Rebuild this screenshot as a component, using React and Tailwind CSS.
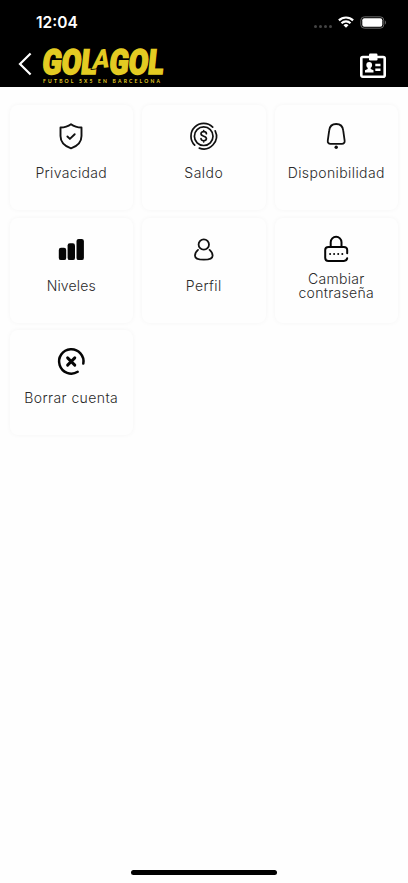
const ShieldIcon = () => (
  <svg viewBox="0 0 36 36" className="w-9 h-9" fill="none" stroke="#111" strokeWidth="1.900" strokeLinecap="round" strokeLinejoin="round">
    <path d="M18 6.200c3 2.300 6.500 3.300 10.500 3.300v8.500c0 6.500-4.500 10.300-10.500 12.300-6-2-10.500-5.800-10.500-12.300V9.500c4 0 7.500-1 10.500-3.300z" />
    <path d="M14.400 18.500l2.500 2.400 4.800-4.700" />
  </svg>
);

const CoinIcon = () => (
  <svg viewBox="0 0 36 36" className="w-9 h-9" fill="none" stroke="#111" strokeWidth="1.700" strokeLinecap="round">
    <circle cx="17.700" cy="18.200" r="9.300" />
    <path d="M8.700 27.200A12.700 12.700 0 0 1 26.700 9.200" />
    <path d="M29.200 12.800A12.700 12.700 0 0 1 13.300 30.100" />
    <path d="M20.400 15.700c0-1.300-1.100-2.100-2.700-2.100s-2.700.9-2.700 2.200c0 3.100 5.400 1.700 5.400 4.800 0 1.300-1.100 2.200-2.700 2.200s-2.700-.9-2.700-2.200M17.700 12.700v1M17.700 22.800v1" />
  </svg>
);

const BellIcon = () => (
  <svg viewBox="0 0 36 36" className="w-9 h-9" fill="none" stroke="#111" strokeWidth="1.800" strokeLinejoin="round">
    <path d="M18.200 6c-4 0-6.600 2.600-7 6.400L9.800 22.300c-.4 2.400.8 3.500 2.700 3.500h11.400c1.900 0 3.100-1.100 2.700-3.500L25.200 12.400C24.800 8.600 22.200 6 18.200 6z" />
    <circle cx="18.200" cy="29.300" r="1.700" fill="#111" stroke="none" />
  </svg>
);

const BarsIcon = () => (
  <svg viewBox="0 0 36 36" className="w-9 h-9" fill="#050505">
    <rect x="5.800" y="16.800" width="7.400" height="12.300" rx="2.200" />
    <rect x="14.600" y="12.200" width="7.400" height="16.900" rx="2.200" />
    <rect x="23.500" y="7.900" width="7.400" height="21.200" rx="2.200" />
  </svg>
);

const PersonIcon = () => (
  <svg viewBox="0 0 36 36" className="w-9 h-9" fill="none" stroke="#111" strokeWidth="1.800" strokeLinecap="round">
    <circle cx="17.800" cy="13.500" r="5.200" />
    <path d="M12 18.900c-1.900 1.600-3 3.700-3 5.800 0 2.700 3.100 4 8.800 4s8.800-1.300 8.800-4c0-2.100-1.100-4.200-3-5.800" />
  </svg>
);

const LockIcon = () => (
  <svg viewBox="0 0 36 36" className="w-9 h-9" fill="none" stroke="#050505" strokeWidth="2" strokeLinecap="round">
    <path d="M12.700 15.500v-4.300a5.400 5.400 0 0 1 10.800 0v4.300" />
    <path d="M29.200 22.200v-3.100c0-2-1.300-3.200-3.300-3.200H10.500c-2 0-3.300 1.200-3.300 3.200v7.600c0 2 1.300 3.200 3.300 3.200h15.400c1.900 0 3.100-1 3.300-2.700" />
    <path d="M12.100 22.900h.01M16.100 22.900h.01M20.200 22.900h.01M24.300 22.900h.01" />
  </svg>
);

const DeleteIcon = () => (
  <svg viewBox="0 0 36 36" className="w-9 h-9" fill="none" stroke="#050505" strokeWidth="2.500" strokeLinecap="round">
    <path d="M30.300 20.600A12.200 12.200 0 1 0 24.700 28.800" />
    <path d="M14.600 14.900l7.200 7.200M21.800 14.900l-7.200 7.200" strokeWidth="2.900" />
  </svg>
);

const items = [
  { label: 'Privacidad', icon: ShieldIcon, tracking: 'tracking-[0.35px]' },
  { label: 'Saldo', icon: CoinIcon, tracking: 'tracking-[0.45px]' },
  { label: 'Disponibilidad', icon: BellIcon, tracking: 'tracking-[0.4px]' },
  { label: 'Niveles', icon: BarsIcon, tracking: 'tracking-[0.15px]' },
  { label: 'Perfil', icon: PersonIcon, tracking: 'tracking-[0.4px]' },
  { label: 'Cambiar contraseña', icon: LockIcon, tracking: 'tracking-[0.3px]' },
  { label: 'Borrar cuenta', icon: DeleteIcon, tracking: 'tracking-[0.4px]' },
];

function StatusBar() {
  return (
    <div className="h-[44px] pl-9 pr-[21px] flex items-center justify-between">
      <span className="text-white text-[15.500px] leading-none font-semibold pt-[2px]">12:04</span>
      <div className="flex items-center">
        <div className="flex gap-[1.500px] mt-[9px] mr-[6px]">
          <span className="w-[3.500px] h-[3.500px] rounded-full bg-[#444]" />
          <span className="w-[3.500px] h-[3.500px] rounded-full bg-[#444]" />
          <span className="w-[3.500px] h-[3.500px] rounded-full bg-[#444]" />
          <span className="w-[3.500px] h-[3.500px] rounded-full bg-[#444]" />
        </div>
        <svg width="16" height="12" viewBox="0 0 16 12" fill="none" stroke="#fff" strokeWidth="2.200" className="mr-[6px]">
          <path d="M.9 4.400a10.200 10.200 0 0 1 14.200 0" />
          <path d="M3.500 7.200a6.500 6.500 0 0 1 9 0" />
          <path d="M8 11.800L5.500 9.200a3.600 3.600 0 0 1 5 0z" fill="#fff" stroke="none" />
        </svg>
        <svg width="27" height="13" viewBox="0 0 27 13">
          <rect x="0.800" y="0.800" width="23" height="11.400" rx="3.500" fill="none" stroke="#666" strokeWidth="1" />
          <rect x="2.300" y="2.300" width="20" height="8.400" rx="2" fill="#fff" />
          <path d="M25 4.500c1.300.5 1.300 3.500 0 4z" fill="#666" />
        </svg>
      </div>
    </div>
  );
}

function Logo() {
  return (
    <svg width="126" height="42" viewBox="0 0 126 42" fill="#e3cb22" className="ml-[9px] -mt-[3px] overflow-visible">
      <g
        transform="translate(0.500 31) skewX(-6)"
        fontFamily="Roboto"
        fontWeight="900"
        fontSize="34.500"
        stroke="#e3cb22"
        strokeWidth="1.700"
        strokeLinejoin="miter"
      >
        <text x="0" y="0" textLength="54" lengthAdjust="spacingAndGlyphs">GOL</text>
        <text x="67" y="0" textLength="54" lengthAdjust="spacingAndGlyphs">GOL</text>
      </g>
      <text
        transform="translate(50.500 26) rotate(-6) skewX(-16)"
        fontFamily="Roboto"
        fontWeight="900"
        fontSize="26"
        textLength="17"
        lengthAdjust="spacingAndGlyphs"
        stroke="#000"
        strokeWidth="1.500"
        paintOrder="stroke"
      >
        A
      </text>
      <text x="2" y="39.800" fontFamily="Lato" fontWeight="700" fontSize="5" textLength="117">
        FUTBOL 5X5 EN BARCELONA
      </text>
    </svg>
  );
}

function Header() {
  return (
    <header className="bg-black h-[87px]">
      <StatusBar />
      <div className="h-[43px] flex items-center pl-[18px] pr-[21px]">
        <svg width="14" height="24" viewBox="0 0 14 24" fill="none" stroke="#fff" strokeWidth="2.200" className="-mt-[4px]">
          <path d="M12.600 1.500L2 12l10.600 10.500" />
        </svg>
        <Logo />
        <svg width="28" height="28" viewBox="0 0 28 28" fill="#fff" className="ml-auto">
          <rect x="2.300" y="5" width="23.400" height="19.800" rx="1.500" fill="none" stroke="#fff" strokeWidth="2.600" />
          <rect x="10" y="1.500" width="8.500" height="7" rx="1.200" />
          <circle cx="10.200" cy="13" r="2.900" />
          <path d="M8.700 14h3v3l2.800 1.300v2.300H6v-2.300L8.700 17z" />
          <path d="M16.300 11.700h5.200v2.500h-5.200zM16.300 16.600h5.200v2.500h-5.200z" />
        </svg>
      </div>
    </header>
  );
}

export default function App() {
  return (
    <div className="h-[883px] bg-[#fefefe] flex flex-col font-['Inter',sans-serif]">
      <Header />

      <main className="grow pl-[9.500px] pr-[10px] pt-[18px]">
        <div className="grid grid-cols-3 gap-x-[9px] gap-y-[7.700px]">
          {items.map(({ label, icon: Icon, tracking }) => (
            <button
              key={label}
              className="h-[105px] rounded-lg bg-[#fefefe] shadow-[0_0_5px_rgba(0,0,0,0.045)] flex flex-col items-center pt-[13px]"
            >
              <Icon />
              <span className={`h-[28px] mt-[5px] px-3 flex items-center text-center text-[14px] leading-[14px] font-light text-[#2a2a2a] ${tracking}`}>
                {label}
              </span>
            </button>
          ))}
        </div>
      </main>

      <div className="w-[146px] h-[5px] mx-auto mb-[8px] rounded-full bg-black" />
    </div>
  );
}
